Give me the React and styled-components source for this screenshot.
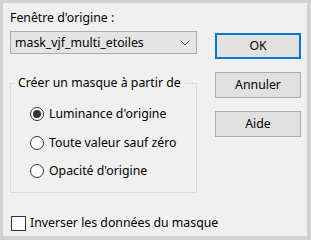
import React from 'react'
import styled, { createGlobalStyle } from 'styled-components'

const GlobalStyle = createGlobalStyle`
  html, body {
    margin: 0;
    padding: 0;
    background: #d2d2d2;
  }
  * {
    box-sizing: border-box;
  }
`

const Frame = styled.div`
  width: 311px;
  height: 240px;
  padding: 3px 4px 4px 3px;
  background: #d2d2d2;
  font-family: "Noto Sans", "Open Sans", sans-serif;
  font-size: 12.3px;
  line-height: 16px;
  color: #000;
  white-space: nowrap;
`

const Panel = styled.div`
  height: 100%;
  background: #f0f0f0;
  padding: 7px 0 0 7px;
  display: flex;
  flex-direction: column;
`

const TopRow = styled.div`
  display: flex;
  gap: 18px;
`

const LeftCol = styled.div`
  width: 187px;
  display: flex;
  flex-direction: column;
`

const RightCol = styled.div`
  width: 86px;
  padding-top: 23px;
  display: flex;
  flex-direction: column;
  gap: 13px;
`

const Label = styled.div`
  height: 16px;
`

const Combo = styled.div`
  margin-top: 5px;
  height: 23px;
  border: 1px solid #acacac;
  background: #e5e5e5;
  display: flex;
  align-items: center;
  justify-content: space-between;
  padding: 0 6px 0 4px;
`

const Button = styled.div`
  height: 26px;
  display: flex;
  align-items: center;
  justify-content: center;
  background: #e1e1e1;
  border: ${p => (p.$default ? '2px solid #0078d7' : '1px solid #adadad')};
`

const Group = styled.fieldset`
  margin: 21px 0 0 0;
  width: 187px;
  height: 118px;
  padding: 9px 0 0 19px;
  border: 1px solid #dcdcdc;
  min-width: 0;
`

const Legend = styled.legend`
  margin-left: -15px;
  padding: 0 3px;
  line-height: 16px;
  white-space: nowrap;
`

const RadioRow = styled.div`
  height: 28.5px;
  display: flex;
  align-items: center;
  gap: 5px;
`

const RadioDot = styled.span`
  width: 14px;
  height: 14px;
  border-radius: 50%;
  border: 1px solid #333;
  background: #fff;
  display: flex;
  align-items: center;
  justify-content: center;

  &::after {
    content: '';
    width: 8px;
    height: 8px;
    border-radius: 50%;
    background: ${p => (p.$checked ? '#333' : 'transparent')};
  }
`

const CheckRow = styled.div`
  margin-top: 22px;
  display: flex;
  align-items: center;
  gap: 4px;
  padding-left: 1px;
`

const CheckBox = styled.span`
  width: 15px;
  height: 15px;
  border: 1px solid #333;
  background: #fff;
`

const Chevron = () => (
  <svg width="10" height="6" viewBox="0 0 10 6">
    <path d="M0.5 0.5 L5 5 L9.5 0.5" fill="none" stroke="#555" strokeWidth="1" />
  </svg>
)

const options = [
  { label: "Luminance d'origine", checked: true },
  { label: 'Toute valeur sauf zéro', checked: false },
  { label: "Opacité d'origine", checked: false },
]

const App = () => {
  return (
    <>
      <GlobalStyle />
      <Frame>
        <Panel>
          <TopRow>
            <LeftCol>
              <Label>Fenêtre d'origine :</Label>
              <Combo>
                <span>mask_vjf_multi_etoiles</span>
                <Chevron />
              </Combo>
              <Group>
                <Legend>Créer un masque à partir de</Legend>
                {options.map(o => (
                  <RadioRow key={o.label}>
                    <RadioDot $checked={o.checked} />
                    <span>{o.label}</span>
                  </RadioRow>
                ))}
              </Group>
            </LeftCol>
            <RightCol>
              <Button $default>OK</Button>
              <Button>Annuler</Button>
              <Button>Aide</Button>
            </RightCol>
          </TopRow>
          <CheckRow>
            <CheckBox />
            <span>Inverser les données du masque</span>
          </CheckRow>
        </Panel>
      </Frame>
    </>
  )
}

export default App
